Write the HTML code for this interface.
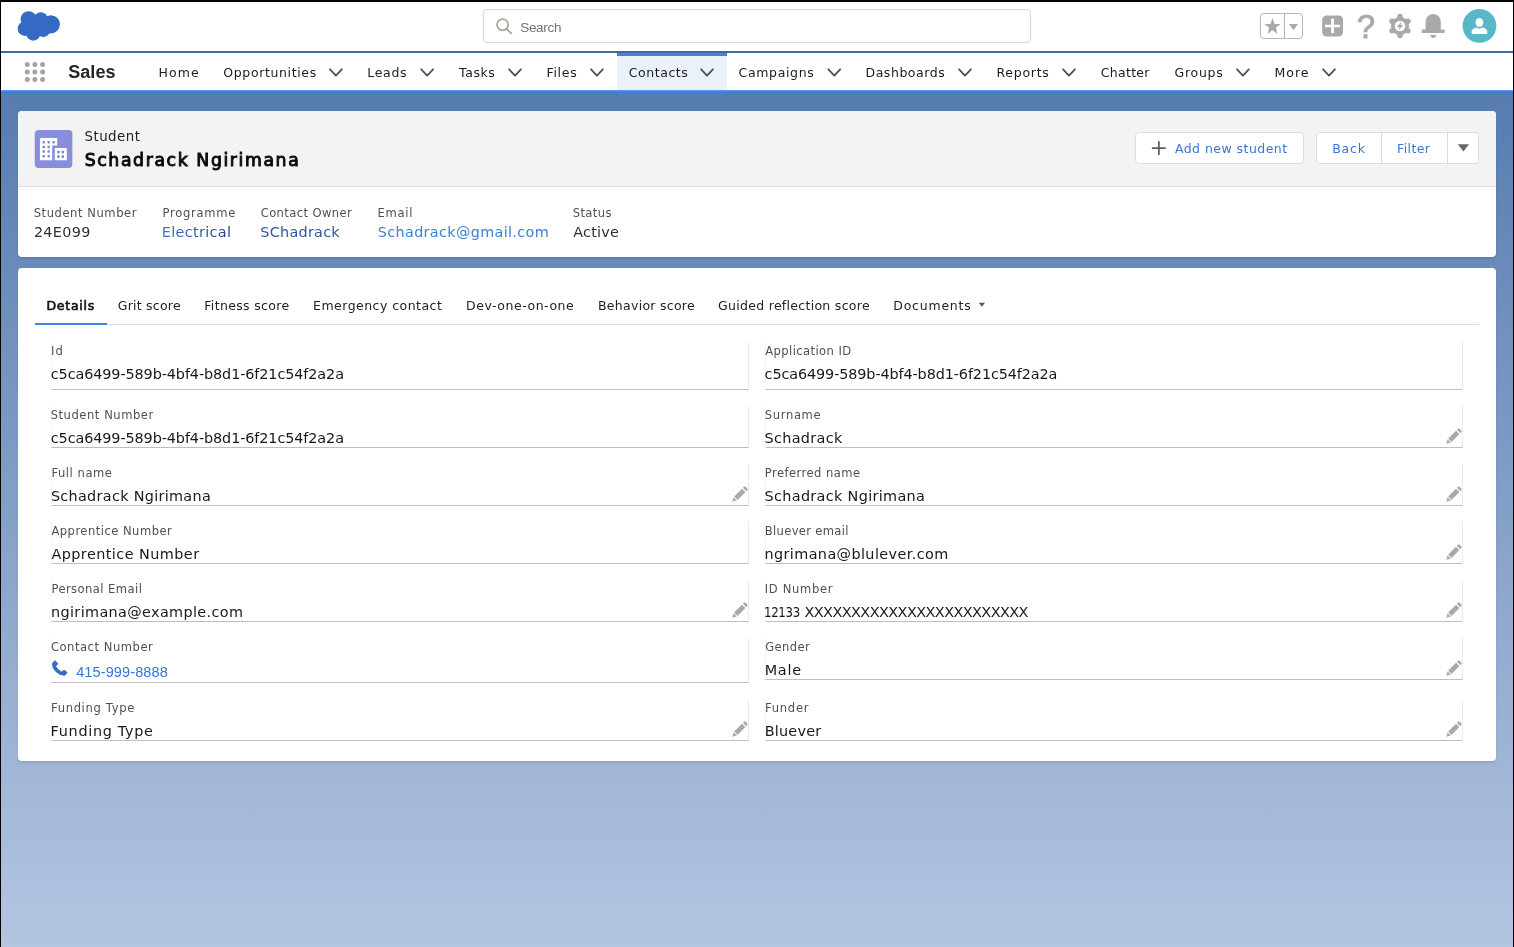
<!DOCTYPE html>
<html lang="en">
<head>
<meta charset="utf-8">
<title>Student | Salesforce</title>
<style>
*{box-sizing:border-box;margin:0;padding:0}
html,body{width:1514px;height:947px;overflow:hidden;background:#fff}
body{position:relative;font-family:"DejaVu Sans","Liberation Sans",sans-serif;color:#2b2b2b;-webkit-font-smoothing:antialiased}
#root{position:absolute;left:0;top:0;width:1514px;height:947px;will-change:transform}
.abs{position:absolute}
.t{position:absolute;white-space:nowrap;line-height:20px}
#bg{left:0;top:93px;width:1514px;height:854px;background:linear-gradient(180deg,#577cb0 0px,#b4c5e0 854px)}
#hdr{left:0;top:0;width:1514px;height:51px;background:#fff}
#hdrline{left:0;top:51px;width:1514px;height:3px;background:linear-gradient(180deg,#3f6aa8 0,#3d68a6 2px,#cdd8ea 2px,#cdd8ea 3px)}
#nav{left:0;top:53px;width:1514px;height:37px;background:#fff}
#navline{left:0;top:90px;width:1514px;height:3px;background:linear-gradient(180deg,#6297e8 0,#6297e8 1px,#4180e0 1px,#3f7ddd 3px)}
#btop{left:0;top:0;width:1514px;height:2px;background:#000;z-index:50}
#bleft{left:0;top:0;width:1px;height:947px;background:#000;z-index:50}
#bright{left:1513px;top:0;width:1px;height:947px;background:#000;z-index:50}
/* header */
#search{left:483px;top:9px;width:548px;height:34px;border:1px solid #d6d6d6;border-radius:4px;background:#fff}
.lib{font-family:"Liberation Sans",sans-serif}
.sr{font-size:13.5px;color:#747474}
#fav{left:1260px;top:13px;width:43px;height:26px;border:1px solid #b7b7b7;border-radius:4px}
#favdiv{left:1284px;top:13px;width:1px;height:26px;background:#b4b4b4}
#q{font-size:32.5px;line-height:38px;color:#a9a9a9;-webkit-text-stroke:0.9px #a9a9a9}
/* nav */
.nv{font-size:12.5px;color:#1c1c1c}
#sales{font-size:18px;font-weight:bold;color:#25232c}
#ctab{left:617px;top:53px;width:110px;height:37px;background:#eaf1fb;border-top:3px solid #4682dc}
/* cards */
#c1{left:18px;top:111px;width:1478px;height:146px;background:#fff;border-radius:4px;box-shadow:0 2px 2px rgba(0,0,0,.10)}
#c1h{left:18px;top:111px;width:1478px;height:76px;background:#f3f3f3;border-radius:4px 4px 0 0;border-bottom:1px solid #dedede}
#c2{left:18px;top:268px;width:1478px;height:493px;background:#fff;border-radius:4px;box-shadow:0 2px 2px rgba(0,0,0,.10)}
.btn{background:#fff;border:1px solid #dcdcdc;border-radius:4px}
.bl{color:#3b77d3;font-size:12.5px}
.lb{font-size:11.55px;color:#505050}
.vl{font-size:14.4px;color:#303030}
.fv{font-size:14.4px;color:#181818}
.tb{font-size:12.5px;color:#222}
.tbb{color:#111;-webkit-text-stroke:0.6px #111}
.st{font-size:13.4px;color:#222}
.nm{font-size:17.3px;color:#0b0b0b;-webkit-text-stroke:0.95px #0b0b0b}
.ph{font-size:14.5px;color:#3575d6}
.f{width:698px;height:42px;border-left:1px solid #f4f4f4;border-right:1px solid #ebebeb;border-bottom:1px solid #bfbfbf}
</style>
</head>
<body>
<div id="root">
<div id="bg" class="abs"></div>
<div id="hdr" class="abs"></div>
<div id="hdrline" class="abs"></div>
<div id="nav" class="abs"></div>
<div id="ctab" class="abs"></div>
<div id="navline" class="abs"></div>

<!-- HEADER -->
<svg class="abs" style="left:17px;top:10px" width="45" height="32" viewBox="17 10 45 32">
  <g fill="#356ac4">
    <circle cx="28.6" cy="19.2" r="8"/>
    <circle cx="40.8" cy="19.3" r="7"/>
    <circle cx="50.8" cy="24.3" r="9.1"/>
    <circle cx="24.9" cy="28.7" r="7.2"/>
    <circle cx="33.3" cy="33.5" r="7.2"/>
    <circle cx="43.3" cy="30.1" r="6.8"/>
    <ellipse cx="38" cy="26" rx="12" ry="8"/>
  </g>
</svg>
<div id="search" class="abs"></div>
<svg class="abs" style="left:495px;top:17px" width="18" height="18" viewBox="0 0 18 18">
  <circle cx="7.6" cy="7.7" r="5.6" fill="none" stroke="#a9a39c" stroke-width="1.7"/>
  <path d="M11.6 11.9 L16.2 16.4" stroke="#a9a39c" stroke-width="1.9" stroke-linecap="round"/>
</svg>

<div id="fav" class="abs"></div>
<div id="favdiv" class="abs"></div>
<svg class="abs" style="left:1264px;top:17px" width="17" height="18" viewBox="0 0 17 18">
  <path fill="#a9a9a9" d="M8.5 1 L10.6 6.9 L16.6 7 L11.8 10.8 L13.5 16.9 L8.5 13.3 L3.5 16.9 L5.2 10.8 L0.4 7 L6.4 6.9 Z"/>
</svg>
<svg class="abs" style="left:1288px;top:23px" width="11" height="8" viewBox="0 0 11 8">
  <path fill="#a9a9a9" d="M1 1 H10 L5.5 7.2 Z"/>
</svg>
<svg class="abs" style="left:1322px;top:15px" width="22" height="22" viewBox="0 0 22 22">
  <rect x="0.2" y="0.4" width="20.8" height="21.2" rx="4.2" fill="#a9a9a9"/>
  <rect x="3" y="9.75" width="15" height="2.5" fill="#fff"/>
  <rect x="9.1" y="3.7" width="2.8" height="14.5" fill="#fff"/>
</svg>
<!-- gear -->
<svg class="abs" style="left:1386.5px;top:12.9px" width="26" height="26" viewBox="-13 -13 26 26">
  <g fill="#a9a9a9">
    <circle r="9.1"/>
    <circle cx="0" cy="-9.35" r="2.8"/><circle cx="0" cy="9.35" r="2.8"/>
    <circle cx="7.85" cy="-4.68" r="2.8"/><circle cx="7.85" cy="4.68" r="2.8"/>
    <circle cx="-7.85" cy="-4.68" r="2.8"/><circle cx="-7.85" cy="4.68" r="2.8"/>
  </g>
  <circle r="5.25" fill="#fff"/>
  <path fill="#a9a9a9" d="M1.7 -4.4 L-3.3 0.9 H-0.5 L-1.7 4.4 L3.3 -1.1 H0.5 Z"/>
</svg>
<!-- bell -->
<svg class="abs" style="left:1420px;top:13px" width="26" height="26" viewBox="0 0 26 26">
  <g fill="#a9a9a9">
    <path d="M5.6 16.6 V9 A7.6 8 0 0 1 20.8 9 V16.6 H23.6 Q24.8 16.6 24.8 17.8 V18.8 Q24.8 20 23.6 20 H2.8 Q1.6 20 1.6 18.8 V17.8 Q1.6 16.6 2.8 16.6 Z"/>
    <path d="M10.2 22 H16.2 Q15.6 25 13.2 25 Q10.8 25 10.2 22 Z"/>
  </g>
</svg>
<!-- avatar -->
<svg class="abs" style="left:1462px;top:8px" width="36" height="36" viewBox="0 0 36 36">
  <circle cx="17.45" cy="17.95" r="16.9" fill="#58b8ca"/>
  <path fill="#fff" d="M10.6 25.9 Q9.6 25.9 9.6 24.9 V23.8 Q9.6 20.7 14 19.5 Q17.4 21.8 20.8 19.5 Q25.3 20.7 25.3 23.8 V24.9 Q25.3 25.9 24.3 25.9 Z"/>
  <ellipse cx="17.4" cy="14.55" rx="4.65" ry="5.3" fill="#58b8ca"/>
  <ellipse cx="17.4" cy="14.5" rx="3.85" ry="4.5" fill="#fff"/>
</svg>

<!-- NAV -->
<svg class="abs" style="left:24px;top:61px" width="22" height="22" viewBox="24 61 22 22">
  <g fill="#a4a4a4">
    <circle cx="27.3" cy="64.4" r="2.5"/><circle cx="34.9" cy="64.4" r="2.5"/><circle cx="42.6" cy="64.4" r="2.5"/>
    <circle cx="27.3" cy="71.9" r="2.5"/><circle cx="34.9" cy="71.9" r="2.5"/><circle cx="42.6" cy="71.9" r="2.5"/>
    <circle cx="27.3" cy="79.4" r="2.5"/><circle cx="34.9" cy="79.4" r="2.5"/><circle cx="42.6" cy="79.4" r="2.5"/>
  </g>
</svg>
<svg class="abs" style="left:0;top:60px" width="1400" height="24" viewBox="0 60 1400 24">
  <g fill="none" stroke="#505050" stroke-width="1.8" stroke-linecap="round" stroke-linejoin="round">
    <path d="M330.0 69.3 l5.9 6.3 l5.9 -6.3"/>
    <path d="M421.3 69.3 l5.9 6.3 l5.9 -6.3"/>
    <path d="M509.1 69.3 l5.9 6.3 l5.9 -6.3"/>
    <path d="M591.0 69.3 l5.9 6.3 l5.9 -6.3"/>
    <path d="M701.1 69.3 l5.9 6.3 l5.9 -6.3"/>
    <path d="M828.4 69.3 l5.9 6.3 l5.9 -6.3"/>
    <path d="M959.1 69.3 l5.9 6.3 l5.9 -6.3"/>
    <path d="M1063.1 69.3 l5.9 6.3 l5.9 -6.3"/>
    <path d="M1237.0 69.3 l5.9 6.3 l5.9 -6.3"/>
    <path d="M1323.1 69.3 l5.9 6.3 l5.9 -6.3"/>
  </g>
</svg>

<!-- CARD 1 -->
<div id="c1" class="abs"></div>
<div id="c1h" class="abs"></div>
<svg class="abs" style="left:34px;top:129px" width="40" height="40" viewBox="34 129 40 40">
  <rect x="34.75" y="130" width="37.6" height="38" rx="4" fill="#888ddc"/>
  <path fill="#fff" d="M40.6 138 H57.2 V145.6 H52.2 V160.2 H39.9 V138.7 Z"/>
  <path fill="#fff" d="M54.8 148 H66.1 L66.8 148.7 V160.2 H54.8 Z"/>
  <g fill="#7f84d6">
    <rect x="42.5" y="141.1" width="2.5" height="2.5" rx="0.8"/><rect x="47.4" y="141.1" width="2.5" height="2.5" rx="0.8"/><rect x="52.4" y="141.1" width="2.5" height="2.5" rx="0.8"/>
    <rect x="42.5" y="145.7" width="2.5" height="2.5" rx="0.8"/><rect x="47.4" y="145.7" width="2.5" height="2.5" rx="0.8"/>
    <rect x="42.5" y="150.3" width="2.5" height="2.5" rx="0.8"/><rect x="47.4" y="150.3" width="2.5" height="2.5" rx="0.8"/>
    <rect x="42.5" y="154.9" width="2.5" height="2.5" rx="0.8"/><rect x="47.4" y="154.9" width="2.5" height="2.5" rx="0.8"/>
    <rect x="57.1" y="150.8" width="2.6" height="2.6" rx="0.8"/><rect x="61.5" y="150.8" width="2.6" height="2.6" rx="0.8"/>
    <rect x="57.1" y="155.3" width="2.6" height="2.6" rx="0.8"/><rect x="61.5" y="155.3" width="2.6" height="2.6" rx="0.8"/>
  </g>
</svg>

<div class="abs btn" style="left:1135px;top:132px;width:169px;height:32px"></div>
<svg class="abs" style="left:1151px;top:140px" width="16" height="16" viewBox="0 0 16 16"><path d="M7.85 1.3 V14.9 M0.9 8.1 H14.7" stroke="#5a5a5a" stroke-width="1.75" fill="none"/></svg>
<div class="abs btn" style="left:1316px;top:132px;width:163px;height:32px"></div>
<div class="abs" style="left:1381px;top:133px;width:1px;height:30px;background:#dcdcdc"></div>
<div class="abs" style="left:1447px;top:133px;width:1px;height:30px;background:#dcdcdc"></div>
<svg class="abs" style="left:1457px;top:143px" width="13" height="10" viewBox="0 0 13 10"><path fill="#666" d="M0.8 1.2 H12 L6.4 8.6 Z"/></svg>


<!-- CARD 2 -->
<div id="c2" class="abs"></div>
<div class="abs" style="left:35px;top:324px;width:1444px;height:1px;background:#dadada"></div>
<div class="abs" style="left:35px;top:322.6px;width:71.7px;height:2.4px;background:#4383e0"></div>
<svg class="abs" style="left:978px;top:302px" width="8" height="6" viewBox="0 0 8 6"><path fill="#555" d="M0.8 0.8 H7 L3.9 4.8 Z"/></svg>

<!-- fields: left col -->
<div class="abs f" style="left:51px;top:342px;height:48px"></div>
<div class="abs f" style="left:51px;top:406px"></div>
<div class="abs f" style="left:51px;top:464px"></div>
<div class="abs f" style="left:51px;top:522px"></div>
<div class="abs f" style="left:51px;top:580px"></div>
<div class="abs f" style="left:51px;top:638px;height:45px"></div>
<div class="abs f" style="left:51px;top:699px"></div>
<div class="abs f" style="left:765px;top:342px;height:48px"></div>
<div class="abs f" style="left:765px;top:406px"></div>
<div class="abs f" style="left:765px;top:464px"></div>
<div class="abs f" style="left:765px;top:522px"></div>
<div class="abs f" style="left:765px;top:580px"></div>
<div class="abs f" style="left:765px;top:638px"></div>
<div class="abs f" style="left:765px;top:699px"></div>

<svg class="abs" style="left:51px;top:659px" width="18" height="18" viewBox="-0.84 -1.1 18 18">
  <path fill="#356ac8" stroke="#356ac8" stroke-width="1" stroke-linejoin="round" d="M3.1 0.6 L5.9 3.5 L3.8 6.3 Q5.9 10.1 9.6 11.9 L12.4 10.2 L15.3 12.5 L12.7 15.2 Q7.9 15 3.8 11.2 Q0.5 7.8 0.7 3.2 Z"/>
</svg>


<svg width="0" height="0" style="position:absolute"><defs>
  <g id="pen" fill="#a9a9a9">
    <path d="M0.3 15.8 L1.5 11.2 L4.9 14.6 Z"/>
    <path d="M2.2 10.5 L10 2.7 L13.4 6.1 L5.6 13.9 Z"/>
    <path d="M10.9 1.8 L12 0.7 Q12.8 0 13.6 0.7 L15.4 2.5 Q16.1 3.3 15.4 4.1 L14.3 5.2 Z"/>
  </g>
</defs></svg>
<svg class="abs pn" style="left:732px;top:486px" width="17" height="17"><use href="#pen"/></svg>
<svg class="abs pn" style="left:732px;top:602px" width="17" height="17"><use href="#pen"/></svg>
<svg class="abs pn" style="left:732px;top:721px" width="17" height="17"><use href="#pen"/></svg>
<svg class="abs pn" style="left:1446px;top:428px" width="17" height="17"><use href="#pen"/></svg>
<svg class="abs pn" style="left:1446px;top:486px" width="17" height="17"><use href="#pen"/></svg>
<svg class="abs pn" style="left:1446px;top:544px" width="17" height="17"><use href="#pen"/></svg>
<svg class="abs pn" style="left:1446px;top:602px" width="17" height="17"><use href="#pen"/></svg>
<svg class="abs pn" style="left:1446px;top:660px" width="17" height="17"><use href="#pen"/></svg>
<svg class="abs pn" style="left:1446px;top:721px" width="17" height="17"><use href="#pen"/></svg>


<!--TEXT-START-->
<span id="srch" class="t lib sr" style="left:520.2px;top:18.0px;letter-spacing:-0.30px">Search</span>
<span id="q" class="t lib" style="left:1357.0px;top:8.0px">?</span>
<span id="sales" class="t lib" style="left:68.2px;top:62.0px;letter-spacing:0.08px">Sales</span>
<span id="n1" class="t nv" style="left:158.5px;top:63.0px;letter-spacing:1.10px">Home</span>
<span id="n2" class="t nv" style="left:223.3px;top:63.0px;letter-spacing:0.63px">Opportunities</span>
<span id="n3" class="t nv" style="left:367.2px;top:63.0px;letter-spacing:0.70px">Leads</span>
<span id="n4" class="t nv" style="left:459.0px;top:63.0px;letter-spacing:0.59px">Tasks</span>
<span id="n5" class="t nv" style="left:546.4px;top:63.0px;letter-spacing:0.72px">Files</span>
<span id="n6" class="t nv" style="left:628.7px;top:63.0px;letter-spacing:0.57px">Contacts</span>
<span id="n7" class="t nv" style="left:738.5px;top:63.0px;letter-spacing:0.66px">Campaigns</span>
<span id="n8" class="t nv" style="left:865.5px;top:63.0px;letter-spacing:0.54px">Dashboards</span>
<span id="n9" class="t nv" style="left:996.5px;top:63.0px;letter-spacing:0.72px">Reports</span>
<span id="n10" class="t nv" style="left:1100.8px;top:63.0px;letter-spacing:0.29px">Chatter</span>
<span id="n11" class="t nv" style="left:1174.6px;top:63.0px;letter-spacing:0.70px">Groups</span>
<span id="n12" class="t nv" style="left:1274.5px;top:63.0px;letter-spacing:1.02px">More</span>
<span id="stu" class="t st" style="left:84.5px;top:127.0px;letter-spacing:0.45px">Student</span>
<span id="name" class="t nm" style="left:84.7px;top:150.0px;letter-spacing:1.60px">Schadrack Ngirimana</span>
<span id="b1" class="t bl" style="left:1174.9px;top:139.0px;letter-spacing:0.46px">Add new student</span>
<span id="b2" class="t bl" style="left:1332.2px;top:139.0px;letter-spacing:0.83px">Back</span>
<span id="b3" class="t bl" style="left:1397.0px;top:139.0px;letter-spacing:0.40px">Filter</span>
<span id="h1" class="t lb" style="left:33.7px;top:203.0px;letter-spacing:0.56px">Student Number</span>
<span id="h2" class="t lb" style="left:162.4px;top:203.0px;letter-spacing:0.75px">Programme</span>
<span id="h3" class="t lb" style="left:260.7px;top:203.0px;letter-spacing:0.39px">Contact Owner</span>
<span id="h4" class="t lb" style="left:377.5px;top:203.0px;letter-spacing:0.75px">Email</span>
<span id="h5" class="t lb" style="left:572.7px;top:203.0px;letter-spacing:0.41px">Status</span>
<span id="v1" class="t vl" style="left:33.9px;top:222.0px;letter-spacing:0.32px">24E099</span>
<span id="v2" class="t vl" style="left:161.7px;top:222.0px;letter-spacing:0.35px;background:linear-gradient(90deg,#4776c0 0%,#2c56a2 55%,#1f3e80 100%);-webkit-background-clip:text;background-clip:text;color:transparent;-webkit-text-fill-color:transparent">Electrical</span>
<span id="v3" class="t vl" style="left:260.3px;top:222.0px;letter-spacing:0.27px;color:#2e579f">SChadrack</span>
<span id="v4" class="t vl" style="left:377.8px;top:222.0px;letter-spacing:0.34px;color:#3e80d6">Schadrack@gmail.com</span>
<span id="v5" class="t vl" style="left:573.3px;top:222.0px;letter-spacing:0.22px">Active</span>
<span id="t1" class="t tb tbb" style="left:46.5px;top:296.0px;letter-spacing:0.72px">Details</span>
<span id="t2" class="t tb" style="left:117.8px;top:296.0px;letter-spacing:0.23px">Grit score</span>
<span id="t3" class="t tb" style="left:204.2px;top:296.0px;letter-spacing:0.35px">Fitness score</span>
<span id="t4" class="t tb" style="left:313.1px;top:296.0px;letter-spacing:0.47px">Emergency contact</span>
<span id="t5" class="t tb" style="left:466.0px;top:296.0px;letter-spacing:0.54px">Dev-one-on-one</span>
<span id="t6" class="t tb" style="left:598.0px;top:296.0px;letter-spacing:0.28px">Behavior score</span>
<span id="t7" class="t tb" style="left:718.1px;top:296.0px;letter-spacing:0.29px">Guided reflection score</span>
<span id="t8" class="t tb" style="left:893.3px;top:296.0px;letter-spacing:0.77px">Documents</span>
<span id="l1" class="t lb" style="left:51.0px;top:341.0px;letter-spacing:1.10px">Id</span>
<span id="f1" class="t fv" style="left:50.8px;top:364.0px;letter-spacing:-0.10px">c5ca6499-589b-4bf4-b8d1-6f21c54f2a2a</span>
<span id="l2" class="t lb" style="left:50.7px;top:405.0px;letter-spacing:0.54px">Student Number</span>
<span id="f2" class="t fv" style="left:50.8px;top:428.0px;letter-spacing:-0.10px">c5ca6499-589b-4bf4-b8d1-6f21c54f2a2a</span>
<span id="l3" class="t lb" style="left:51.4px;top:463.0px;letter-spacing:0.55px">Full name</span>
<span id="f3" class="t fv" style="left:50.9px;top:486.0px;letter-spacing:0.31px">Schadrack Ngirimana</span>
<span id="l4" class="t lb" style="left:51.4px;top:521.0px;letter-spacing:0.48px">Apprentice Number</span>
<span id="f4" class="t fv" style="left:51.4px;top:544.0px;letter-spacing:0.45px">Apprentice Number</span>
<span id="l5" class="t lb" style="left:51.4px;top:579.0px;letter-spacing:0.44px">Personal Email</span>
<span id="f5" class="t fv" style="left:51.0px;top:602.0px;letter-spacing:0.37px">ngirimana@example.com</span>
<span id="l6" class="t lb" style="left:50.9px;top:637.0px;letter-spacing:0.53px">Contact Number</span>
<span id="f6" class="t lib ph" style="left:76.2px;top:662.0px;letter-spacing:0.12px">415-999-8888</span>
<span id="l7" class="t lb" style="left:51.0px;top:698.0px;letter-spacing:0.66px">Funding Type</span>
<span id="f7" class="t fv" style="left:50.6px;top:721.0px;letter-spacing:0.69px">Funding Type</span>
<span id="r1" class="t lb" style="left:765.2px;top:341.0px;letter-spacing:0.42px">Application ID</span>
<span id="g1" class="t fv" style="left:764.6px;top:364.0px;letter-spacing:-0.11px">c5ca6499-589b-4bf4-b8d1-6f21c54f2a2a</span>
<span id="r2" class="t lb" style="left:764.7px;top:405.0px;letter-spacing:0.67px">Surname</span>
<span id="g2" class="t fv" style="left:764.6px;top:428.0px;letter-spacing:0.32px">Schadrack</span>
<span id="r3" class="t lb" style="left:764.8px;top:463.0px;letter-spacing:0.45px">Preferred name</span>
<span id="g3" class="t fv" style="left:764.6px;top:486.0px;letter-spacing:0.33px">Schadrack Ngirimana</span>
<span id="r4" class="t lb" style="left:764.8px;top:521.0px;letter-spacing:0.32px">Bluever email</span>
<span id="g4" class="t fv" style="left:764.4px;top:544.0px;letter-spacing:0.41px">ngrimana@blulever.com</span>
<span id="r5" class="t lb" style="left:764.8px;top:579.0px;letter-spacing:0.66px">ID Number</span>
<span id="g5a" class="t fv" style="left:764.3px;top:602.0px;letter-spacing:-0.40px;transform:scaleX(.82);transform-origin:0 50%">12133</span>
<span id="g5b" class="t fv" style="left:804.5px;top:602.0px;letter-spacing:-0.55px">XXXXXXXXXXXXXXXXXXXXXXXX</span>
<span id="r6" class="t lb" style="left:765.2px;top:637.0px;letter-spacing:0.40px">Gender</span>
<span id="g6" class="t fv" style="left:764.7px;top:660.0px;letter-spacing:0.76px">Male</span>
<span id="r7" class="t lb" style="left:764.9px;top:698.0px;letter-spacing:0.77px">Funder</span>
<span id="g7" class="t fv" style="left:764.7px;top:721.0px;letter-spacing:0.23px">Bluever</span>
<!--TEXT-END-->
<div id="btop" class="abs"></div>
<div id="bleft" class="abs"></div>
<div id="bright" class="abs"></div>
</div>
</body>
</html>
